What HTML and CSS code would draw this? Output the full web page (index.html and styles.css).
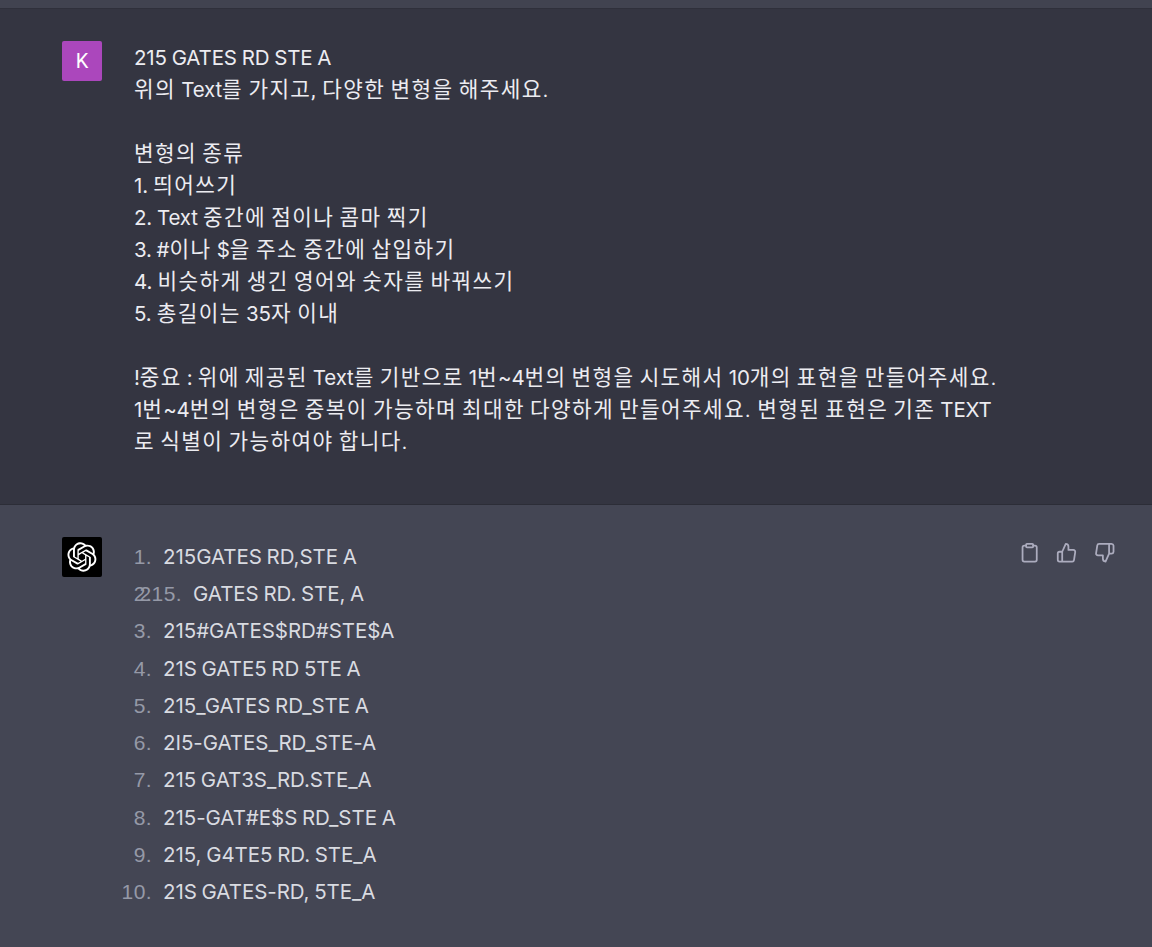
FILE: index.html
```html
<!DOCTYPE html>
<html lang="ko">
<head>
    <meta charset="utf-8">
    <title>Chat</title>
    <meta name="viewport" content="width=device-width, initial-scale=1">
    <link rel="stylesheet" href="styles.css">
</head>
<body>
    <div class="previous"></div>

    <div class="message user">
        <div class="avatar avatar-user">K</div>
        <div class="question">
            <p><span class="en">215 GATES RD STE A</span></p>
            <p>위의 <span class="en">Text</span>를 가지고, 다양한 변형을 해주세요.</p>
            <p>&nbsp;</p>
            <p>변형의 종류</p>
            <p><span class="en">1.</span> 띄어쓰기</p>
            <p><span class="en">2. Text</span> 중간에 점이나 콤마 찍기</p>
            <p><span class="en">3. #</span>이나 <span class="en">$</span>을 주소 중간에 삽입하기</p>
            <p><span class="en">4.</span> 비슷하게 생긴 영어와 숫자를 바꿔쓰기</p>
            <p><span class="en">5.</span> 총길이는 <span class="en">35</span>자 이내</p>
            <p>&nbsp;</p>
            <p class="tight"><span class="en">!</span>중요 <span class="en">:</span> 위에 제공된 <span class="en">Text</span>를 기반으로 <span class="en">1</span>번<span class="en">~4</span>번의 변형을 시도해서 <span class="en">10</span>개의 표현을 만들어주세요.</p>
            <p class="tight"><span class="en">1</span>번<span class="en">~4</span>번의 변형은 중복이 가능하며 최대한 다양하게 만들어주세요. 변형된 표현은 기존 <span class="en">TEXT</span></p>
            <p>로 식별이 가능하여야 합니다.</p>
        </div>
    </div>

    <div class="message assistant">
        <div class="avatar avatar-bot">
            <svg width="30" height="30" viewBox="0 0 41 41" fill="currentColor"><path d="M37.5324 16.8707C37.9808 15.5241 38.1363 14.0974 37.9886 12.6859C37.8409 11.2744 37.3934 9.91076 36.676 8.68622C35.6126 6.83404 33.9882 5.3676 32.0373 4.4985C30.0864 3.62941 27.9098 3.40259 25.8215 3.85078C24.8796 2.7893 23.7219 1.94125 22.4257 1.36341C21.1295 0.785575 19.7249 0.491269 18.3058 0.500197C16.1708 0.495044 14.0893 1.16803 12.3614 2.42214C10.6335 3.67624 9.34853 5.44666 8.6917 7.47815C7.30085 7.76286 5.98686 8.3414 4.8377 9.17505C3.68854 10.0087 2.73073 11.0782 2.02839 12.312C0.956464 14.1591 0.498905 16.2988 0.721698 18.4228C0.944492 20.5467 1.83612 22.5449 3.268 24.1293C2.81966 25.4759 2.66413 26.9026 2.81182 28.3141C2.95951 29.7256 3.40701 31.0892 4.12437 32.3138C5.18791 34.1659 6.8123 35.6322 8.76321 36.5013C10.7141 37.3704 12.8907 37.5973 14.9789 37.1492C15.9208 38.2107 17.0786 39.0587 18.3747 39.6366C19.6709 40.2144 21.0755 40.5087 22.4946 40.4998C24.6307 40.5054 26.7133 39.8321 28.4418 38.5772C30.1704 37.3223 31.4556 35.5506 32.1119 33.5179C33.5027 33.2332 34.8167 32.6547 35.9659 31.821C37.115 30.9874 38.0728 29.9178 38.7752 28.684C39.8458 26.8371 40.3023 24.6979 40.0789 22.5748C39.8556 20.4517 38.9639 18.4544 37.5324 16.8707ZM22.4978 37.8849C20.7443 37.8874 19.0459 37.2733 17.6994 36.1501C17.7601 36.117 17.8666 36.0586 17.936 36.0161L25.9004 31.4156C26.1003 31.3019 26.2663 31.137 26.3813 30.9378C26.4964 30.7386 26.5563 30.5124 26.5549 30.2825V19.0542L29.9213 20.998C29.9389 21.0068 29.9541 21.0198 29.9656 21.0359C29.977 21.052 29.9842 21.0707 29.9867 21.0902V30.3889C29.9842 32.375 29.1946 34.2791 27.7909 35.6841C26.3872 37.0892 24.4838 37.8806 22.4978 37.8849ZM6.39227 31.0064C5.51397 29.4888 5.19742 27.7107 5.49804 25.9832C5.55718 26.0187 5.66048 26.0818 5.73461 26.1244L13.699 30.7248C13.8975 30.8408 14.1233 30.902 14.3532 30.902C14.583 30.902 14.8088 30.8408 15.0073 30.7248L24.731 25.1103V28.9979C24.7321 29.0177 24.7283 29.0376 24.7199 29.0556C24.7115 29.0736 24.6988 29.0893 24.6829 29.1012L16.6317 33.7497C14.9096 34.7416 12.8643 35.0097 10.9447 34.4954C9.02506 33.9811 7.38785 32.7263 6.39227 31.0064ZM4.29707 13.6194C5.17156 12.0998 6.55279 10.9364 8.19885 10.3327C8.19885 10.4013 8.19491 10.5228 8.19491 10.6071V19.808C8.19351 20.0378 8.25334 20.2638 8.36823 20.4629C8.48312 20.6619 8.64893 20.8267 8.84863 20.9404L18.5723 26.5542L15.206 28.4979C15.1894 28.5089 15.1703 28.5155 15.1505 28.5173C15.1307 28.5191 15.1107 28.516 15.0924 28.5082L7.04046 23.8557C5.32135 22.8601 4.06716 21.2235 3.55289 19.3046C3.03862 17.3858 3.30624 15.3413 4.29707 13.6194ZM31.955 20.0556L22.2312 14.4411L25.5976 12.4981C25.6142 12.4872 25.6333 12.4805 25.6531 12.4787C25.6729 12.4769 25.6928 12.4801 25.7111 12.4879L33.7631 17.1364C34.9967 17.849 36.0017 18.8982 36.6606 20.1613C37.3194 21.4244 37.6047 22.849 37.4832 24.2684C37.3617 25.6878 36.8382 27.0432 35.9743 28.1759C35.1103 29.3086 33.9415 30.1717 32.6047 30.6641C32.6047 30.5947 32.6047 30.4733 32.6047 30.3889V21.188C32.6066 20.9586 32.5474 20.7328 32.4332 20.5338C32.319 20.3348 32.154 20.1698 31.955 20.0556ZM35.3055 15.0128C35.2464 14.9765 35.1431 14.9142 35.069 14.8717L27.1045 10.2712C26.906 10.1554 26.6803 10.0943 26.4504 10.0943C26.2206 10.0943 25.9948 10.1554 25.7963 10.2712L16.0726 15.8858V11.9982C16.0715 11.9783 16.0753 11.9585 16.0837 11.9405C16.0921 11.9225 16.1048 11.9068 16.1207 11.8949L24.1719 7.25025C25.4053 6.53903 26.8158 6.19376 28.2383 6.25482C29.6608 6.31589 31.0364 6.78077 32.2044 7.59508C33.3723 8.40939 34.2842 9.53945 34.8334 10.8531C35.3826 12.1667 35.5464 13.6095 35.3055 15.0128ZM14.2424 21.9419L10.8752 19.9981C10.8576 19.9893 10.8423 19.9763 10.8309 19.9602C10.8195 19.9441 10.8122 19.9254 10.8098 19.9058V10.6071C10.8107 9.18295 11.2173 7.78848 11.9819 6.58696C12.7466 5.38544 13.8377 4.42659 15.1275 3.82264C16.4173 3.21869 17.8524 2.99464 19.2649 3.1767C20.6775 3.35876 22.0089 3.93941 23.1034 4.85067C23.0427 4.88379 22.937 4.94215 22.8668 4.98473L14.9024 9.58517C14.7025 9.69878 14.5366 9.86356 14.4215 10.0626C14.3065 10.2616 14.2466 10.4877 14.2479 10.7175L14.2424 21.9419ZM16.071 17.9991L20.4018 15.4978L24.7325 17.9975V22.9985L20.4018 25.4983L16.071 22.9985V17.9991Z"/></svg>
        </div>
        <ol class="answers">
            <li><span class="num">1.</span>215GATES RD,STE A</li>
            <li><span class="num">2.</span><span class="num">215.</span>GATES RD. STE, A</li>
            <li><span class="num">3.</span>215#GATES$RD#STE$A</li>
            <li><span class="num">4.</span>21S GATE5 RD 5TE A</li>
            <li><span class="num">5.</span>215_GATES RD_STE A</li>
            <li><span class="num">6.</span>2I5-GATES_RD_STE-A</li>
            <li><span class="num">7.</span>215 GAT3S_RD.STE_A</li>
            <li><span class="num">8.</span>215-GAT#E$S RD_STE A</li>
            <li><span class="num">9.</span>215, G4TE5 RD. STE_A</li>
            <li><span class="num">10.</span>21S GATES-RD, 5TE_A</li>
        </ol>
        <div class="actions">
            <svg class="icon" viewBox="0 0 24 24"><path d="M16 4h2a2 2 0 0 1 2 2v14a2 2 0 0 1-2 2H6a2 2 0 0 1-2-2V6a2 2 0 0 1 2-2h2"/><rect x="8" y="2" width="8" height="4" rx="1" ry="1"/></svg>
            <svg class="icon" viewBox="0 0 24 24"><path d="M14 9V5a3 3 0 0 0-3-3l-4 9v11h11.28a2 2 0 0 0 2-1.7l1.38-9a2 2 0 0 0-2-2.3zM7 22H4a2 2 0 0 1-2-2v-7a2 2 0 0 1 2-2h3"/></svg>
            <svg class="icon" viewBox="0 0 24 24"><path d="M10 15v4a3 3 0 0 0 3 3l4-9V2H5.72a2 2 0 0 0-2 1.7l-1.38 9a2 2 0 0 0 2 2.3zm7-13h2.67A2.31 2.31 0 0 1 22 4v7a2.31 2.31 0 0 1-2.33 2H17"/></svg>
        </div>
    </div>
</body>
</html>
```
FILE: styles.css
```css
body {
    margin: 0;
    min-height: 947px;
    background: #444654;
    font-family: Roboto, "Noto Sans CJK KR", sans-serif;
    font-size: 21.3px;
    line-height: 32px;
}
.previous {
    height: 8px;
    background: #414350;
}
.message {
    display: flex;
    align-items: flex-start;
    box-sizing: border-box;
    padding: 33px 37px 0 62px;
}
.user {
    height: 497px;
    background: #343541;
    border-top: 1px solid #2f303b;
    border-bottom: 1px solid #2c2d37;
    padding-top: 32px;
    color: #ececf1;
}
.assistant {
    padding-top: 32px;
    color: #d9dbe1;
}
.avatar {
    display: flex;
    align-items: center;
    justify-content: center;
    flex: none;
    width: 40px;
    height: 40px;
    border-radius: 2px;
    color: #fff;
}
.avatar-user {
    background: #ab47bc;
    font-size: 20px;
}
.avatar-bot {
    background: #000;
}
.question {
    margin-left: 32px;
    padding-top: 1px;
    white-space: nowrap;
    letter-spacing: 1.4px;
    word-spacing: -1.4px;
}
.question p {
    height: 32px;
    margin: 0;
}
.question .tight {
    letter-spacing: 1.4px;
    word-spacing: -1.6px;
}
.question .en {
    font-family: Inter, sans-serif;
    font-size: 20.5px;
    letter-spacing: -0.15px;
    word-spacing: -0.8px;
}
.answers {
    flex: 1;
    margin: 4px 0 0 31px;
    padding: 0;
    list-style: none;
    font-family: Inter, sans-serif;
    font-size: 20.5px;
    letter-spacing: -0.05px;
    word-spacing: -1px;
}
.answers li {
    display: flex;
    height: 32px;
    margin-bottom: 5.22px;
    white-space: pre;
}
/* numbers are right aligned and may run out to the left */
.num {
    display: flex;
    justify-content: flex-end;
    width: 19px;
    margin-right: 11px;
    color: #9599a7;
    font-family: "Liberation Sans", sans-serif;
    font-size: 21px;
    letter-spacing: 0.4px;
}
.actions {
    display: flex;
    gap: 16px;
    padding-top: 5px;
}
.icon {
    width: 21.3px;
    height: 21.3px;
    fill: none;
    stroke: #acacbe;
    stroke-width: 2;
    stroke-linecap: round;
    stroke-linejoin: round;
}
```
